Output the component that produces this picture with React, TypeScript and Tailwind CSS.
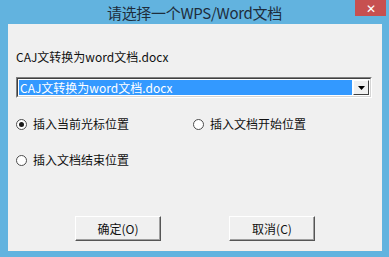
import React from 'react';

const font = { fontFamily: '"Noto Sans CJK SC", "Noto Sans", sans-serif' };

function Radio({ checked, label }: { checked?: boolean; label: string }) {
  return (
    <div className="flex items-center gap-[6px]">
      <span className="w-[11px] h-[11px] rounded-full border border-[#4d4d4d] bg-white flex items-center justify-center">
        {checked && <span className="w-[5px] h-[5px] rounded-full bg-[#1a1a1a]" />}
      </span>
      <span className="text-[12px] leading-none text-[#111]">{label}</span>
    </div>
  );
}

function Btn({ label }: { label: string }) {
  return (
    <div className="w-[86px] h-[25px] border border-t-white border-l-white border-r-[#555] border-b-[#555] bg-[#f0f0f0] shadow-[inset_-1px_-1px_0_#a0a0a0] flex items-center justify-center text-[12px] text-[#111]">
      {label}
    </div>
  );
}

export default function App() {
  return (
    <div style={font} className="w-[389px] h-[257px] bg-[#62b3df] flex flex-col overflow-hidden">
      {/* title bar */}
      <div className="relative h-[24px] flex items-center justify-center">
        <span className="text-[15px] leading-none text-[#1e2d3c] tracking-[-0.3px]">请选择一个WPS/Word文档</span>
        <div className="absolute right-[3px] top-0 w-[31px] h-[16px] bg-[#c75050] flex items-center justify-center text-white text-[12px] leading-none">
          ✕
        </div>
      </div>

      {/* client */}
      <div className="flex-1 ml-[8px] mr-[7px] border-b border-[#f7eee8] bg-[#f0f0f0] flex flex-col pl-[8px] pr-[10px]">
        <div className="mt-[25px] text-[12px] leading-[16px] text-[#111]">CAJ文转换为word文档.docx</div>

        <div className="mt-[12px] h-[21px] flex border border-t-[#808080] border-l-[#808080] border-b-white border-r-white">
          <div className="flex-1 flex border border-t-[#404040] border-l-[#404040] border-b-[#d4d4d4] border-r-[#d4d4d4] bg-white p-[1px]">
            <div className="flex-1 bg-[#3399ff] text-white text-[12px] leading-[15px] pl-[1px]">CAJ文转换为word文档.docx</div>
            <div className="w-[16px] ml-[1px] border border-t-white border-l-white border-r-[#404040] border-b-[#404040] bg-[#f0f0f0] flex items-center justify-center">
              <svg width="7" height="4" viewBox="0 0 7 4"><path d="M0 0h7L3.5 4z" fill="#000" /></svg>
            </div>
          </div>
        </div>

        <div className="mt-[20px] flex">
          <div className="w-[177px]"><Radio checked label="插入当前光标位置" /></div>
          <Radio label="插入文档开始位置" />
        </div>
        <div className="mt-[24px]">
          <Radio label="插入文档结束位置" />
        </div>

        <div className="mt-[50px] flex pl-[59px] gap-[68px]">
          <Btn label="确定(O)" />
          <Btn label="取消(C)" />
        </div>
      </div>
      <div className="h-[6px]" />
    </div>
  );
}
